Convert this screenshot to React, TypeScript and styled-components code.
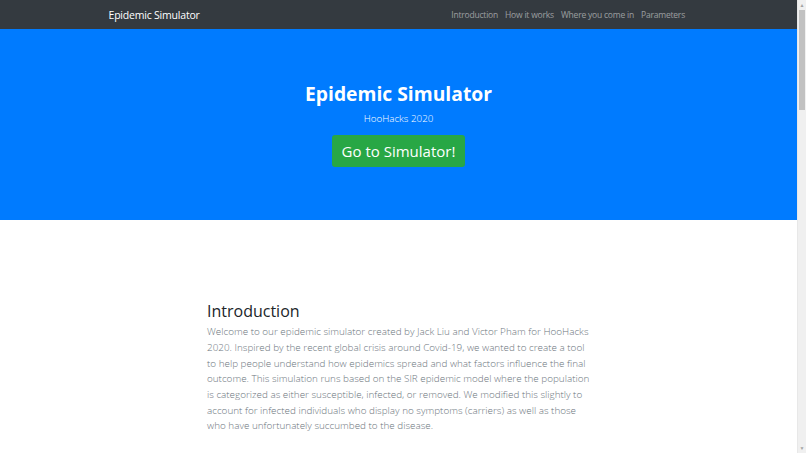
import React from "react";
import styled, { createGlobalStyle } from "styled-components";

const GlobalStyle = createGlobalStyle`
  html, body {
    margin: 0;
    padding: 0;
  }

  body {
    font-family: "Open Sans", "Noto Sans", sans-serif;
    color: #212529;
    background: #fff;
  }
`;

const navLinks = ["Introduction", "How it works", "Where you come in", "Parameters"];

const Page = styled.div`
  padding-right: 9px;
`;

const Navbar = styled.nav`
  height: 29px;
  background: #343a40;
  display: flex;
  justify-content: center;
`;

const NavInner = styled.div`
  width: 580px;
  padding-top: 2px;
  display: flex;
  align-items: center;
  justify-content: space-between;
`;

const Brand = styled.a`
  color: #fff;
  font-size: 10.5px;
  letter-spacing: -0.2px;
  line-height: 1;
  text-decoration: none;
  white-space: nowrap;
`;

const NavList = styled.ul`
  display: flex;
  align-items: center;
  margin: 0;
  padding: 0;
  list-style: none;
`;

const NavLink = styled.a`
  display: block;
  padding: 0 3.5px;
  color: rgba(255, 255, 255, 0.5);
  font-size: 8.5px;
  letter-spacing: -0.2px;
  line-height: 1;
  text-decoration: none;
  white-space: nowrap;
`;

const Hero = styled.header`
  height: 191px;
  background: #007bff;
  color: #fff;
  display: flex;
  flex-direction: column;
  align-items: center;
  justify-content: center;
  text-align: center;
`;

const HeroTitle = styled.h1`
  margin: 0 0 7px;
  font-size: 19.3px;
  font-weight: 700;
  line-height: 1.2;
`;

const HeroSub = styled.p`
  margin: 0 0 8px;
  font-size: 9.8px;
  font-weight: 300;
  line-height: 1.5;
`;

const CtaButton = styled.a`
  display: inline-block;
  background: #28a745;
  color: #fff;
  font-size: 15px;
  line-height: 22px;
  padding: 5px 10px;
  border-radius: 3px;
  text-decoration: none;
`;

const Section = styled.section`
  width: 388px;
  margin: 0 auto;
  padding: 82px 0 40px 5px;
`;

const SectionTitle = styled.h2`
  margin: 0 0 3px;
  font-size: 16px;
  font-weight: 500;
  line-height: 1.2;
`;

const Lead = styled.p`
  margin: 0;
  color: #6c757d;
  font-size: 9.9px;
  font-weight: 300;
  line-height: 15.7px;
`;

// window scrollbar drawn along the right edge
const ScrollRail = styled.div`
  position: fixed;
  top: 0;
  right: 0;
  width: 9px;
  height: 100vh;
  background: #f0f0f0;
  border-left: 1px solid #e8e8e8;
  box-sizing: border-box;
`;

const ScrollThumb = styled.div`
  position: absolute;
  top: 10px;
  left: 1px;
  right: 1px;
  height: 100px;
  background: #c1c1c1;
`;

const ScrollArrow = styled.span<{ $down?: boolean }>`
  position: absolute;
  left: 0;
  right: 0;
  ${({ $down }) => ($down ? "bottom: 2px;" : "top: 2px;")}
  color: #a3a3a3;
  font-size: 5px;
  line-height: 6px;
  text-align: center;
`;

export default function App() {
  return (
    <Page>
      <GlobalStyle />
      <Navbar>
        <NavInner>
          <Brand href="#">Epidemic Simulator</Brand>
          <NavList>
            {navLinks.map((label) => (
              <li key={label}>
                <NavLink href="#">{label}</NavLink>
              </li>
            ))}
          </NavList>
        </NavInner>
      </Navbar>
      <Hero>
        <HeroTitle>Epidemic Simulator</HeroTitle>
        <HeroSub>HooHacks 2020</HeroSub>
        <CtaButton href="#">Go to Simulator!</CtaButton>
      </Hero>
      <Section id="introduction">
        <SectionTitle>Introduction</SectionTitle>
        <Lead>
          Welcome to our epidemic simulator created by Jack Liu and Victor Pham for HooHacks
          2020. Inspired by the recent global crisis around Covid-19, we wanted to create a tool
          to help people understand how epidemics spread and what factors influence the final
          outcome. This simulation runs based on the SIR epidemic model where the population
          is categorized as either susceptible, infected, or removed. We modified this slightly to
          account for infected individuals who display no symptoms (carriers) as well as those
          who have unfortunately succumbed to the disease.
        </Lead>
      </Section>
      <ScrollRail>
        <ScrollArrow>▲</ScrollArrow>
        <ScrollThumb />
        <ScrollArrow $down>▼</ScrollArrow>
      </ScrollRail>
    </Page>
  );
}
